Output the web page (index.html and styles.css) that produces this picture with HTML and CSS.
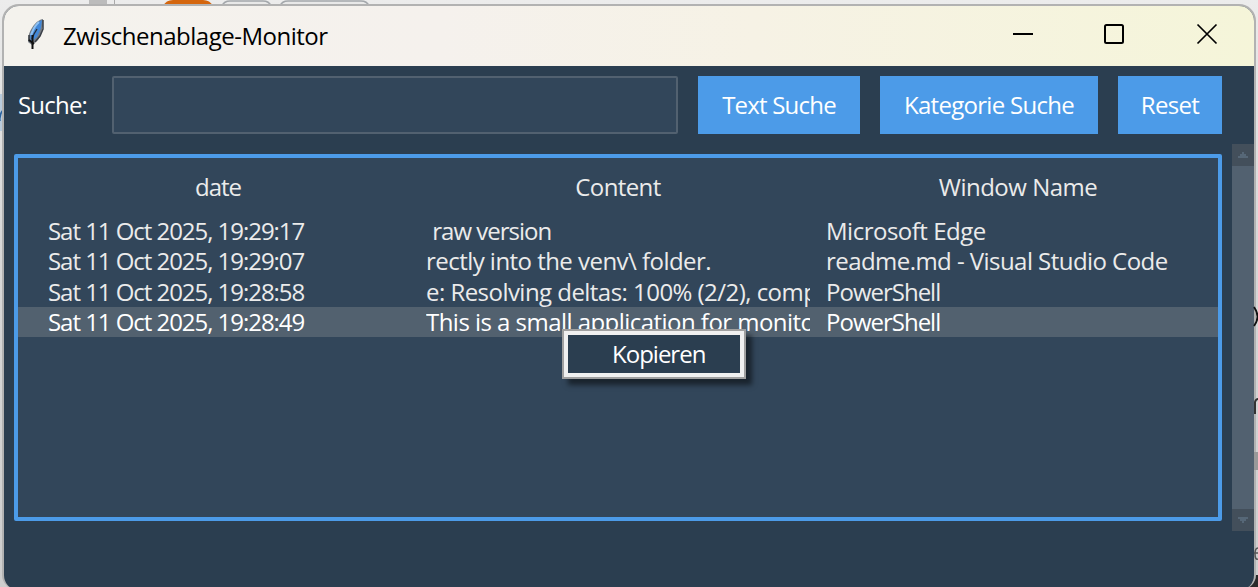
FILE: index.html
```html
<!DOCTYPE html>
<html lang="de">
<head>
<meta charset="utf-8">
<title>Zwischenablage-Monitor</title>
<link rel="stylesheet" href="styles.css">
</head>
<body>
<svg class="desktop" width="1258" height="587" viewBox="0 0 1258 587">
  <defs>
    <linearGradient id="side" x1="0" y1="0" x2="0" y2="1"><stop offset="0" stop-color="#ececec"/><stop offset=".4" stop-color="#d8d8d8"/><stop offset="1" stop-color="#cecece"/></linearGradient>
  </defs>
  <rect width="1258" height="587" fill="url(#side)"/>
  <rect x="0" y="94" width="4" height="37" fill="#b9cbdc"/>
  <path d="M0 121q-1-6 3-11" fill="none" stroke="#2b63a0" stroke-width="1.500"/>
  <rect x="89" y="0" width="18" height="6" fill="#bcbcbc"/>
  <path d="M114.500 0v6" stroke="#aaa"/>
  <path d="M163 6q3-6 10-6h30q7 0 10 6z" fill="#d4660e"/>
  <path d="M222 6q2-5 8-5h33q6 0 8 5M280 6q2-5 8-5h73q6 0 8 5" fill="#e8e8e8" stroke="#a3a7ab" stroke-width="1.500"/>
  <rect x="1240" y="575" width="18" height="12" fill="#2a2a2a"/>
</svg>
<main class="window">
  <header class="titlebar">
    <svg class="feather" width="20" height="34" viewBox="0 0 20 34">
      <path d="M17 1C11 2 6 8 3 16L2 24l4 3 6-5 3-6 2-8z" fill="#777d85"/>
      <path d="M16 2C10 4 7 10 4 17l1 7 6-5 4-9z" fill="#4388d8"/>
      <path d="M13 4C8 8 7 12 5 17" fill="none" stroke="#8fc1f2" stroke-width="2"/>
      <path d="M17 2v9l-3 7-5 6" fill="none" stroke="#3a3f47" stroke-width="1.500"/>
      <path d="M11 11l-3 5-2 5M3 17v6" fill="none" stroke="#252a32" stroke-width="1.300"/>
      <path d="M6.500 17v14" stroke="#111" stroke-width="2"/>
      <path d="M3 22l5 4" stroke="#111" stroke-width="2"/>
    </svg>
    <h1 class="title">Zwischenablage-Monitor</h1>
    <svg class="controls" width="206" height="22" viewBox="0 0 206 22" fill="none" stroke="#000" stroke-width="2">
      <path d="M1 11h20"/>
      <rect x="93" y="2" width="18" height="18" rx="1.500"/>
      <path d="M185.500 1.500l19 19M204.500 1.500l-19 19" stroke-width="1.700"/>
    </svg>
  </header>
  <div class="content">
    <div class="main">
      <form class="search">
        <label class="label" for="q">Suche:</label>
        <input class="entry" id="q" type="text">
        <button class="button text-search" type="button">Text Suche</button>
        <button class="button category-search" type="button">Kategorie Suche</button>
        <button class="button reset" type="button">Reset</button>
      </form>
      <section class="tree">
        <div class="head"><span class="h-date">date</span><span class="h-content">Content</span><span class="h-window">Window Name</span></div>
        <div class="row"><span class="c-date">Sat 11 Oct 2025, 19:29:17</span><span class="c-content raw">&nbsp;raw version</span><span class="c-window edge">Microsoft Edge</span></div>
        <div class="row"><span class="c-date">Sat 11 Oct 2025, 19:29:07</span><span class="c-content">rectly into the venv\ folder.</span><span class="c-window">readme.md - Visual Studio Code</span></div>
        <div class="row"><span class="c-date">Sat 11 Oct 2025, 19:28:58</span><span class="c-content">e: Resolving deltas: 100% (2/2), comp</span><span class="c-window shell">PowerShell</span></div>
        <div class="row selected"><span class="c-date">Sat 11 Oct 2025, 19:28:49</span><span class="c-content">This is a small application for monito</span><span class="c-window shell">PowerShell</span></div>
      </section>
    </div>
    <svg class="scrollbar" width="22" height="387" viewBox="0 0 22 387">
      <rect width="22" height="387" fill="#434f5b"/>
      <rect y="22" width="22" height="343" fill="#526170"/>
      <path d="M10 8h2v2h2v2h2v2H6v-2h2v-2h2zM6 373h10v2h-2v2h-2v2h-2v-2H8v-2H6z" fill="#566777"/>
    </svg>
  </div>
  <div class="menu"><span>Kopieren</span></div>
</main>
<svg class="edge-marks" width="5" height="587" viewBox="1253 0 5 587" fill="none">
  <path d="M1254 307q7 10 0 19" stroke="#111" stroke-width="1.800"/>
  <path d="M1255 414v-12q1-3 3-3" stroke="#333" stroke-width="2"/>
  <path d="M1254 452h4v18h-4z" fill="#999"/>
  <path d="M1258 548q-3 0-3 6t3 5M1254 553h4" stroke="#555" stroke-width="1.500"/>
</svg>
</body>
</html>
```
FILE: styles.css
```css
* { box-sizing: border-box; }
body {
  margin: 0;
  width: 1258px;
  height: 587px;
  overflow: hidden;
  position: relative;
  font: 24px/30px "Open Sans", "Noto Sans", sans-serif;
  letter-spacing: -1px;
}
.desktop { position: absolute; inset: 0; }
.edge-marks { position: absolute; right: 0; top: 0; }
.window {
  position: relative;
  width: 1254px;
  height: 585px;
  margin: 4px 0 0 2px;
  border: 2px solid #b2b2b2;
  border-bottom: 0;
  border-radius: 17px 17px 14px 14px;
  background: #2b3e50;
}
.titlebar {
  display: flex;
  align-items: center;
  height: 60px;
  padding: 0 36px 0 22px;
  border-radius: 15px 15px 0 0;
  background: linear-gradient(90deg, #f4f2ed 0%, #f5f1ed 35%, #f6f2e5 60%, #f5f5d9 100%);
}
.feather { margin-top: -2px; }
.title { margin: 0 auto 0 17px; font-size: 24px; font-weight: 400; line-height: 30px; letter-spacing: -.5px; color: #000; }
.controls { margin-top: -4px; }
.content { display: flex; justify-content: space-between; }
.main { padding: 10px 0 0 10px; width: 1218px; }
.scrollbar { margin-top: 78px; }
.search { display: flex; height: 58px; }
.label { width: 98px; padding: 14px 0 0 4px; color: #fff; letter-spacing: -.8px; }
.entry { width: 566px; border: 2px solid #526170; border-radius: 2px; background: #32465a; outline: 0; }
.button { margin: 0 0 0 20px; padding: 0 0 1px; border: 0; border-radius: 0; background: #4c9be8; color: #fff; font: inherit; letter-spacing: -.8px; white-space: nowrap; }
.text-search { width: 162px; }
.category-search { width: 218px; letter-spacing: -.7px; }
.reset { width: 104px; letter-spacing: -.7px; }
.tree { height: 367px; margin-top: 20px; border: 4px solid #4c9be8; border-radius: 2px; background: #32465a; color: #ebebeb; }
.head, .row { display: grid; grid-template-columns: 400px 400px 400px; white-space: pre; }
.head { height: 59px; padding-top: 14px; text-align: center; }
.h-content { letter-spacing: -.6px; }
.h-window { letter-spacing: -.5px; }
.row { height: 30px; line-height: 28px; }
.row:nth-child(4) { line-height: 30px; }
.row.selected { margin-top: .4px; line-height: 30px; background: #52616f; color: #fff; }
.c-date { padding-left: 30px; letter-spacing: -1.04px; }
.c-content { width: 384px; height: 30px; margin-left: 8px; overflow: hidden; letter-spacing: -.54px; }
.raw { padding-left: 1px; letter-spacing: -1px; }
.c-window { padding-left: 8px; letter-spacing: -.55px; }
.edge { letter-spacing: -.5px; }
.shell { letter-spacing: -1px; }
.menu {
  position: absolute;
  left: 558px;
  top: 323px;
  width: 184px;
  height: 50px;
  padding: 8px 0 0 48px;
  border: 2px solid #a0a0a0;
  background: #2b3e50;
  box-shadow: inset 0 0 0 4px #f0f0f0, 6px 6px 5px rgba(0, 0, 0, .5);
  color: #fff;
}
```
